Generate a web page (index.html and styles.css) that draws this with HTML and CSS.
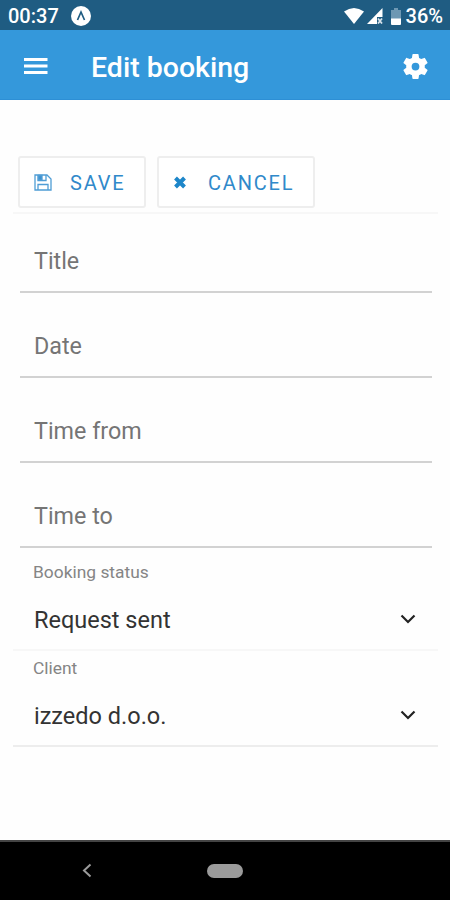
FILE: index.html
```html
<!DOCTYPE html>
<html lang="en">
<head>
  <meta charset="UTF-8" />
  <meta name="viewport" content="width=device-width, initial-scale=1.0"/>
  <title>Edit booking</title>
  <link rel="stylesheet" href="styles.css">
</head>
<body>
  <div class="app-container">
    <div class="statusbar">
      <span class="clock">00:37</span>
      <svg class="app-badge" width="20" height="20" viewBox="0 0 20 20">
        <circle cx="10" cy="10" r="10" fill="#fff"/>
        <path d="M6.500 14 10 6l3.500 8" fill="none" stroke="#1f5c82" stroke-width="1.700"/>
      </svg>
      <svg class="wifi" width="20" height="16" viewBox="0 0 20 16">
        <path d="M0 3.500Q10-3.500 20 3.500L10 16z" fill="#fff"/>
      </svg>
      <svg class="signal" width="16" height="16" viewBox="0 0 16 16">
        <path d="M15.500 0v9H10v7H0z" fill="#fff"/>
        <path d="M11 10.500l4 5M15 10.500l-4 5" stroke="#d5e1e9" stroke-width="1.800"/>
      </svg>
      <svg class="battery" width="10" height="17" viewBox="0 0 10 17">
        <path d="M3 0h4v2h3v9H0V2h3z" fill="#6e98b3"/>
        <path d="M0 10.500h10V16q0 1-1 1H1q-1 0-1-1z" fill="#fff"/>
      </svg>
      <span class="percent">36%</span>
    </div>

    <header class="topbar">
      <svg class="menu-icon" width="24" height="18" viewBox="0 0 24 18">
        <path d="M0 2.500h23.500M0 9h23.500M0 15.500h23.500" stroke="#fff" stroke-width="2.800"/>
      </svg>
      <h1>Edit booking</h1>
      <svg class="settings-icon" width="31" height="31" viewBox="0 0 24 24">
        <path fill="#fff" d="M19.140 12.940c.04-.3.06-.61.06-.94 0-.32-.02-.64-.07-.94l2.030-1.580a.49.49 0 0 0 .12-.61l-1.920-3.320a.488.488 0 0 0-.59-.22l-2.390.96c-.5-.38-1.030-.7-1.620-.94l-.36-2.540a.484.484 0 0 0-.48-.41h-3.840c-.24 0-.43.17-.47.41l-.36 2.540c-.59.24-1.130.57-1.620.94l-2.390-.96c-.22-.08-.47 0-.59.22L2.740 8.870c-.12.21-.08.47.12.61l2.030 1.580c-.05.3-.09.63-.09.94s.02.64.07.94l-2.030 1.580a.49.49 0 0 0-.12.61l1.920 3.320c.12.22.37.29.59.22l2.390-.96c.5.38 1.030.7 1.620.94l.36 2.540c.05.24.24.41.48.41h3.840c.24 0 .44-.17.47-.41l.36-2.540c.59-.24 1.130-.56 1.620-.94l2.390.96c.22.08.47 0 .59-.22l1.920-3.320c.12-.22.07-.47-.12-.61zM12 15A3 3 0 1 1 12 9a3 3 0 0 1 0 6z"/>
      </svg>
    </header>

    <main class="content">
      <div class="actions">
        <button class="btn btn-save">
          <svg width="18" height="18" viewBox="0 0 18 18" fill="none" stroke="#4f9dd5" stroke-width="1.300">
            <path d="M1 1h12l4 4v11H1z"/>
            <path d="M4 1v5.500h8V1M4 16v-5.500h10V16"/>
            <path d="M4.500 1.500H8V6H4.500z" fill="#3d91cf"/>
          </svg>
          <span>SAVE</span>
        </button>
        <button class="btn btn-cancel">
          <svg width="14" height="13" viewBox="0 0 14 13">
            <path d="M2.500 2l9 9M11.500 2l-9 9" stroke="#1d86c9" stroke-width="4"/>
          </svg>
          <span>CANCEL</span>
        </button>
      </div>

      <form class="booking-form">
        <div class="field">Title</div>
        <div class="field">Date</div>
        <div class="field">Time from</div>
        <div class="field">Time to</div>
      </form>

      <div class="select select-first">
        <div class="select-label">Booking status</div>
        <div class="select-value">
          <span>Request sent</span>
          <svg class="chevron" width="16" height="10" viewBox="0 0 16 10"><path d="M1.500 1.500 8 8l6.500-6.500" fill="none" stroke="#222" stroke-width="2.200"/></svg>
        </div>
      </div>
      <div class="select select-last">
        <div class="select-label">Client</div>
        <div class="select-value">
          <span>izzedo d.o.o.</span>
          <svg class="chevron" width="16" height="10" viewBox="0 0 16 10"><path d="M1.500 1.500 8 8l6.500-6.500" fill="none" stroke="#222" stroke-width="2.200"/></svg>
        </div>
      </div>
    </main>

    <nav class="navbar">
      <svg class="nav-back" width="10" height="15" viewBox="0 0 10 15"><path d="M8.500 1.500 2 7.500l6.500 6" fill="none" stroke="#9b9b9b" stroke-width="2"/></svg>
      <span class="nav-home"></span>
    </nav>
  </div>
</body>
</html>
```
FILE: styles.css
```css
* {
  box-sizing: border-box;
}

body {
  margin: 0;
  font-family: Roboto, "Liberation Sans", sans-serif;
  background: #fefefe;
  color: #333;
}

.app-container {
  display: flex;
  flex-direction: column;
  height: 900px;
  overflow: hidden;
}

.statusbar {
  height: 30px;
  background: #1f5c82;
  display: flex;
  align-items: center;
  padding: 2px 7px 0 8px;
  color: #fff;
  font-size: 20px;
  font-weight: 500;
}

.clock {
  width: 51px;
}

.app-badge {
  margin-left: 12px;
}

.wifi {
  margin-left: auto;
}

.signal {
  margin-left: 3px;
}

.battery {
  margin: 0 5px 0 8px;
}

.topbar {
  height: 70px;
  background: #3498db;
  border-bottom: 1px solid #2d8fd5;
  display: flex;
  align-items: center;
  padding: 3px 19px 0 24px;
}

h1 {
  margin: 2px 0 0 43px;
  color: #fff;
  font-size: 28.5px;
  font-weight: 500;
}

.settings-icon {
  margin-left: auto;
}

.content {
  flex: 1;
  padding: 56px 12px 0 13px;
}

.actions {
  display: flex;
  gap: 11px;
  height: 58px;
  padding-left: 5px;
  border-bottom: 2px solid #f7f7f7;
}

.btn {
  height: 52px;
  display: flex;
  align-items: center;
  border: 2px solid #eeeeee;
  border-radius: 3px;
  background: #fff;
  color: #3089ca;
  font-family: inherit;
  font-size: 20px;
  letter-spacing: 1.8px;
  padding: 1px 0 0 14px;
}

.btn-save {
  width: 128px;
  gap: 18px;
}

.btn-cancel {
  width: 158px;
  gap: 21px;
}

.booking-form {
  padding: 0 6px 0 7px;
}

.field {
  height: 85px;
  display: flex;
  align-items: center;
  padding: 23px 0 0 14px;
  border-bottom: 2px solid #d2d2d2;
  color: #757575;
  font-size: 23.3px;
}

.field:first-child {
  height: 79px;
  padding-top: 17px;
}

.select {
  height: 96px;
  border-bottom: 2px solid #f7f7f7;
}

.select-first {
  height: 103px;
  padding-top: 7px;
}

.select-last {
  border-bottom-color: #ededed;
}

.select-label {
  padding: 6px 0 0 20px;
  color: #858585;
  font-size: 17.4px;
  line-height: 22px;
}

.select-value {
  display: flex;
  justify-content: space-between;
  margin-top: 22px;
  padding: 0 22px 0 21px;
  font-size: 23.5px;
  line-height: 30px;
}

.chevron {
  margin-top: 9px;
}

.navbar {
  height: 60px;
  background: #000;
  border-top: 2px solid #444;
  display: flex;
  align-items: center;
  padding: 0 0 1px 82px;
}

.nav-home {
  width: 36px;
  height: 14px;
  margin-left: 115px;
  border-radius: 7px;
  background: #9b9b9b;
}
```
